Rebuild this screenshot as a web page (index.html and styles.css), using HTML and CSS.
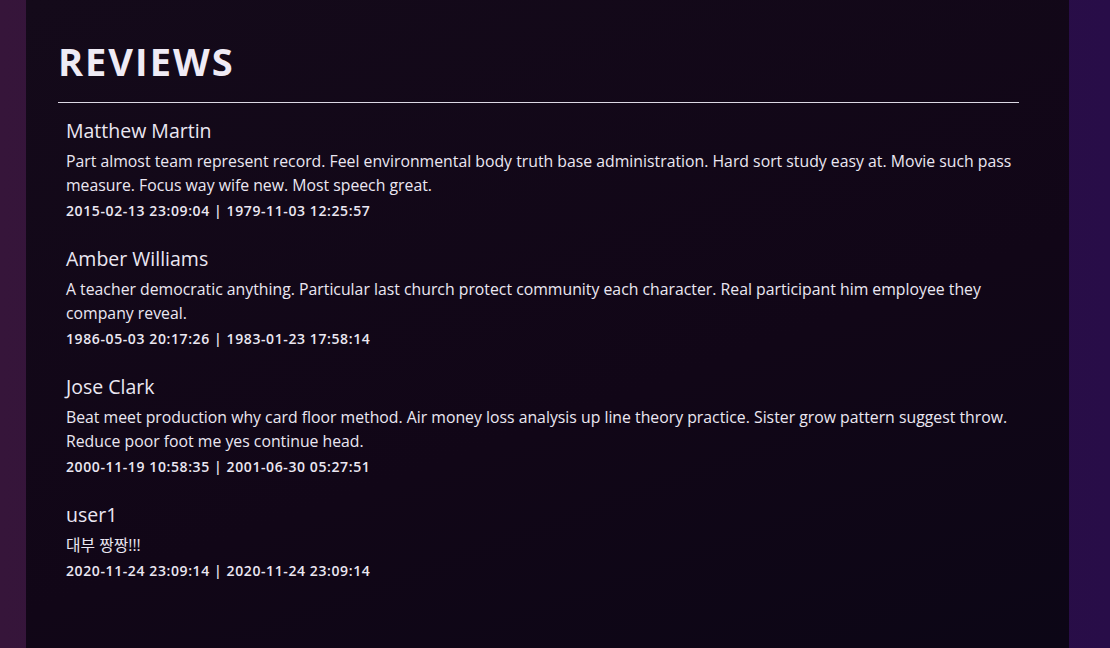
FILE: index.html
```html
<!DOCTYPE html>
<html lang="en">
<head>
<meta charset="utf-8">
<title>Reviews</title>
<link rel="stylesheet" href="styles.css">
</head>
<body>
<div class="page">
  <main class="panel">
    <h1 class="title">REVIEWS</h1>
    <hr class="rule">
    <section class="reviews">
      <article class="review">
        <h2 class="review-name">Matthew Martin</h2>
        <p class="review-text">Part almost team represent record. Feel environmental body truth base administration. Hard sort study easy at. Movie such pass measure. Focus way wife new. Most speech great.</p>
        <p class="review-date">2015-02-13 23:09:04 | 1979-11-03 12:25:57</p>
      </article>
      <article class="review">
        <h2 class="review-name">Amber Williams</h2>
        <p class="review-text">A teacher democratic anything. Particular last church protect community each character. Real participant him employee they company reveal.</p>
        <p class="review-date">1986-05-03 20:17:26 | 1983-01-23 17:58:14</p>
      </article>
      <article class="review">
        <h2 class="review-name">Jose Clark</h2>
        <p class="review-text">Beat meet production why card floor method. Air money loss analysis up line theory practice. Sister grow pattern suggest throw. Reduce poor foot me yes continue head.</p>
        <p class="review-date">2000-11-19 10:58:35 | 2001-06-30 05:27:51</p>
      </article>
      <article class="review">
        <h2 class="review-name">user1</h2>
        <p class="review-text">대부 짱짱!!!</p>
        <p class="review-date">2020-11-24 23:09:14 | 2020-11-24 23:09:14</p>
      </article>
    </section>
  </main>
</div>
</body>
</html>
```
FILE: styles.css
```css
* { box-sizing: border-box; }
html, body {
  margin: 0;
  padding: 0;
  height: 100%;
}
body {
  font-family: "Open Sans", "Noto Sans CJK KR", sans-serif;
  color: #ebe7f2;
  background: linear-gradient(90deg, #36153a 0%, #2c1042 60%, #280d48 100%);
}
.page {
  min-height: 100%;
  padding: 0 41px 0 26px;
  display: flex;
}
.panel {
  flex: 1;
  background: linear-gradient(160deg, #140a1a 0%, #110617 60%, #0c0616 100%);
  padding: 38px 50px 40px 32px;
}
.title {
  margin: 0;
  font-size: 38px;
  font-weight: 700;
  line-height: 46px;
  color: #efebf5;
  letter-spacing: 2px;
}
.rule {
  margin: 18px 0 0 0;
  border: 0;
  height: 1px;
  background: #dcd8e4;
}
.reviews {
  padding: 14px 0 0 8px;
  display: flex;
  flex-direction: column;
  gap: 23px;
}
.review-name {
  margin: 0 0 4px 0;
  font-size: 19.5px;
  font-weight: 400;
  line-height: 28px;
}
.review-text {
  margin: 0;
  font-size: 15.8px;
  line-height: 24px;
}
.review-date {
  margin: 3px 0 0 0;
  font-size: 14px;
  font-weight: 600;
  letter-spacing: 0.6px;
  line-height: 22px;
}
```
